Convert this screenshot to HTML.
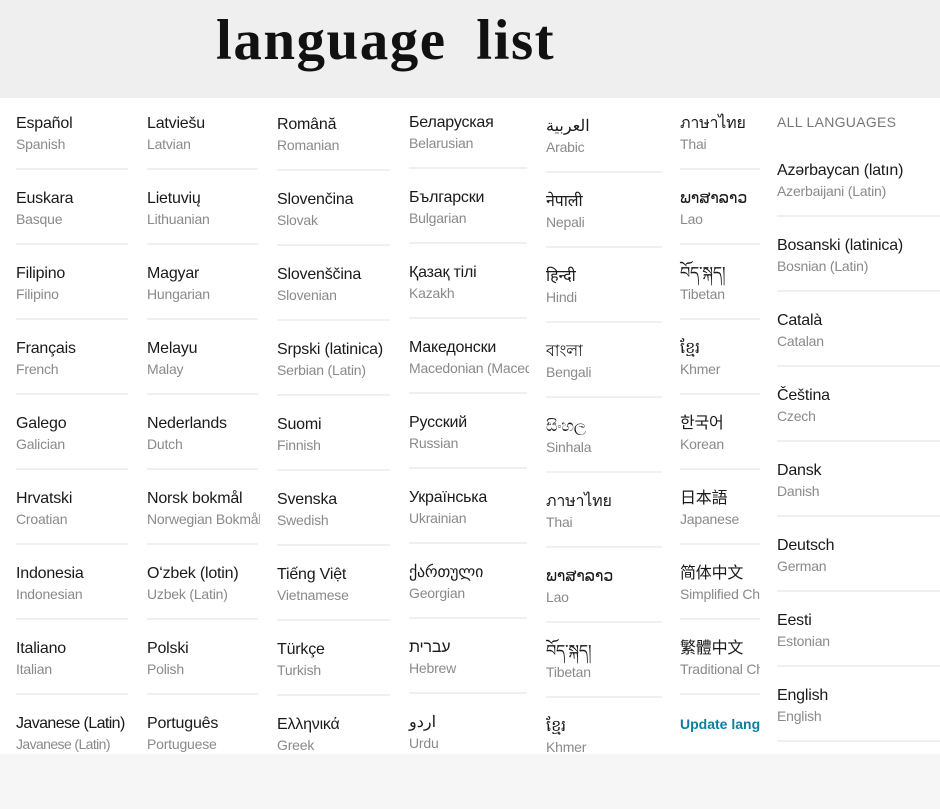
<!DOCTYPE html>
<html><head><meta charset="utf-8"><style>
*{margin:0;padding:0;box-sizing:border-box}
body{width:940px;height:809px;background:#f6f6f6;position:relative;overflow:hidden;font-family:"Liberation Sans","Noto Sans CJK SC",sans-serif}
.hdr{position:absolute;left:0;top:0;width:940px;height:98px;background:#efefef}
.ttl{position:absolute;left:216px;top:6px;font-family:"Liberation Serif",serif;font-weight:bold;font-size:57px;line-height:70px;color:#111;word-spacing:14px;letter-spacing:1.5px;white-space:nowrap}
.col{position:absolute;top:98px;height:656px;background:#fff;overflow:hidden}
.it{position:absolute;left:0;height:75px;white-space:nowrap}
.t{position:absolute;top:6px;font-size:16px;line-height:20px;color:#1a1a1a;letter-spacing:-0.2px}
.s{position:absolute;top:27px;font-size:14px;line-height:18px;color:#8a8a8a;letter-spacing:-0.2px}
.ln{position:absolute;top:60px;height:2px;background:#f0f0f0}
.hd{position:absolute;font-size:14px;color:#777;letter-spacing:0.3px;white-space:nowrap}
.up{position:absolute;font-size:14px;font-weight:bold;color:#0b7fa0;white-space:nowrap}
</style></head><body>
<div class="hdr"></div>
<div class="ttl">language list</div>

<div class="col" style="left:0;width:130px">
<div class="it" style="top:10px"><div class="t" style="left:16px">Español</div><div class="s" style="left:16px">Spanish</div><div class="ln" style="left:16px;width:112px"></div></div>
<div class="it" style="top:85px"><div class="t" style="left:16px">Euskara</div><div class="s" style="left:16px">Basque</div><div class="ln" style="left:16px;width:112px"></div></div>
<div class="it" style="top:160px"><div class="t" style="left:16px">Filipino</div><div class="s" style="left:16px">Filipino</div><div class="ln" style="left:16px;width:112px"></div></div>
<div class="it" style="top:235px"><div class="t" style="left:16px">Français</div><div class="s" style="left:16px">French</div><div class="ln" style="left:16px;width:112px"></div></div>
<div class="it" style="top:310px"><div class="t" style="left:16px">Galego</div><div class="s" style="left:16px">Galician</div><div class="ln" style="left:16px;width:112px"></div></div>
<div class="it" style="top:385px"><div class="t" style="left:16px">Hrvatski</div><div class="s" style="left:16px">Croatian</div><div class="ln" style="left:16px;width:112px"></div></div>
<div class="it" style="top:460px"><div class="t" style="left:16px">Indonesia</div><div class="s" style="left:16px">Indonesian</div><div class="ln" style="left:16px;width:112px"></div></div>
<div class="it" style="top:535px"><div class="t" style="left:16px">Italiano</div><div class="s" style="left:16px">Italian</div><div class="ln" style="left:16px;width:112px"></div></div>
<div class="it" style="top:610px"><div class="t" style="left:16px;letter-spacing:-0.6px">Javanese (Latin)</div><div class="s" style="left:16px;letter-spacing:-0.6px">Javanese (Latin)</div></div>
</div>

<div class="col" style="left:130px;width:130px">
<div class="it" style="top:10px"><div class="t" style="left:17px">Latviešu</div><div class="s" style="left:17px">Latvian</div><div class="ln" style="left:17px;width:111px"></div></div>
<div class="it" style="top:85px"><div class="t" style="left:17px">Lietuvių</div><div class="s" style="left:17px">Lithuanian</div><div class="ln" style="left:17px;width:111px"></div></div>
<div class="it" style="top:160px"><div class="t" style="left:17px">Magyar</div><div class="s" style="left:17px">Hungarian</div><div class="ln" style="left:17px;width:111px"></div></div>
<div class="it" style="top:235px"><div class="t" style="left:17px">Melayu</div><div class="s" style="left:17px">Malay</div><div class="ln" style="left:17px;width:111px"></div></div>
<div class="it" style="top:310px"><div class="t" style="left:17px">Nederlands</div><div class="s" style="left:17px">Dutch</div><div class="ln" style="left:17px;width:111px"></div></div>
<div class="it" style="top:385px"><div class="t" style="left:17px">Norsk bokmål</div><div class="s" style="left:17px">Norwegian Bokmål</div><div class="ln" style="left:17px;width:111px"></div></div>
<div class="it" style="top:460px"><div class="t" style="left:17px">Oʻzbek (lotin)</div><div class="s" style="left:17px">Uzbek (Latin)</div><div class="ln" style="left:17px;width:111px"></div></div>
<div class="it" style="top:535px"><div class="t" style="left:17px">Polski</div><div class="s" style="left:17px">Polish</div><div class="ln" style="left:17px;width:111px"></div></div>
<div class="it" style="top:610px"><div class="t" style="left:17px">Português</div><div class="s" style="left:17px">Portuguese</div></div>
</div>

<div class="col" style="left:260px;width:132px">
<div class="it" style="top:11px"><div class="t" style="left:17px">Română</div><div class="s" style="left:17px">Romanian</div><div class="ln" style="left:17px;width:113px"></div></div>
<div class="it" style="top:86px"><div class="t" style="left:17px">Slovenčina</div><div class="s" style="left:17px">Slovak</div><div class="ln" style="left:17px;width:113px"></div></div>
<div class="it" style="top:161px"><div class="t" style="left:17px">Slovenščina</div><div class="s" style="left:17px">Slovenian</div><div class="ln" style="left:17px;width:113px"></div></div>
<div class="it" style="top:236px"><div class="t" style="left:17px">Srpski (latinica)</div><div class="s" style="left:17px">Serbian (Latin)</div><div class="ln" style="left:17px;width:113px"></div></div>
<div class="it" style="top:311px"><div class="t" style="left:17px">Suomi</div><div class="s" style="left:17px">Finnish</div><div class="ln" style="left:17px;width:113px"></div></div>
<div class="it" style="top:386px"><div class="t" style="left:17px">Svenska</div><div class="s" style="left:17px">Swedish</div><div class="ln" style="left:17px;width:113px"></div></div>
<div class="it" style="top:461px"><div class="t" style="left:17px">Tiếng Việt</div><div class="s" style="left:17px">Vietnamese</div><div class="ln" style="left:17px;width:113px"></div></div>
<div class="it" style="top:536px"><div class="t" style="left:17px">Türkçe</div><div class="s" style="left:17px">Turkish</div><div class="ln" style="left:17px;width:113px"></div></div>
<div class="it" style="top:611px"><div class="t" style="left:17px">Ελληνικά</div><div class="s" style="left:17px">Greek</div></div>
</div>

<div class="col" style="left:392px;width:137px">
<div class="it" style="top:9px"><div class="t" style="left:17px">Беларуская</div><div class="s" style="left:17px">Belarusian</div><div class="ln" style="left:17px;width:118px"></div></div>
<div class="it" style="top:84px"><div class="t" style="left:17px">Български</div><div class="s" style="left:17px">Bulgarian</div><div class="ln" style="left:17px;width:118px"></div></div>
<div class="it" style="top:159px"><div class="t" style="left:17px">Қазақ тілі</div><div class="s" style="left:17px">Kazakh</div><div class="ln" style="left:17px;width:118px"></div></div>
<div class="it" style="top:234px"><div class="t" style="left:17px">Македонски</div><div class="s" style="left:17px">Macedonian (Macedonia)</div><div class="ln" style="left:17px;width:118px"></div></div>
<div class="it" style="top:309px"><div class="t" style="left:17px">Русский</div><div class="s" style="left:17px">Russian</div><div class="ln" style="left:17px;width:118px"></div></div>
<div class="it" style="top:384px"><div class="t" style="left:17px">Українська</div><div class="s" style="left:17px">Ukrainian</div><div class="ln" style="left:17px;width:118px"></div></div>
<div class="it" style="top:459px"><div class="t" style="left:17px">ქართული</div><div class="s" style="left:17px">Georgian</div><div class="ln" style="left:17px;width:118px"></div></div>
<div class="it" style="top:534px"><div class="t" style="left:17px">עברית</div><div class="s" style="left:17px">Hebrew</div><div class="ln" style="left:17px;width:118px"></div></div>
<div class="it" style="top:609px"><div class="t" style="left:17px">اردو</div><div class="s" style="left:17px">Urdu</div></div>
</div>

<div class="col" style="left:529px;width:135px">
<div class="it" style="top:13px"><div class="t" style="left:17px">العربية</div><div class="s" style="left:17px">Arabic</div><div class="ln" style="left:17px;width:116px"></div></div>
<div class="it" style="top:88px"><div class="t" style="left:17px">नेपाली</div><div class="s" style="left:17px">Nepali</div><div class="ln" style="left:17px;width:116px"></div></div>
<div class="it" style="top:163px"><div class="t" style="left:17px">हिन्दी</div><div class="s" style="left:17px">Hindi</div><div class="ln" style="left:17px;width:116px"></div></div>
<div class="it" style="top:238px"><div class="t" style="left:17px">বাংলা</div><div class="s" style="left:17px">Bengali</div><div class="ln" style="left:17px;width:116px"></div></div>
<div class="it" style="top:313px"><div class="t" style="left:17px">සිංහල</div><div class="s" style="left:17px">Sinhala</div><div class="ln" style="left:17px;width:116px"></div></div>
<div class="it" style="top:388px"><div class="t" style="left:17px">ภาษาไทย</div><div class="s" style="left:17px">Thai</div><div class="ln" style="left:17px;width:116px"></div></div>
<div class="it" style="top:463px"><div class="t" style="left:17px">ພາສາລາວ</div><div class="s" style="left:17px">Lao</div><div class="ln" style="left:17px;width:116px"></div></div>
<div class="it" style="top:538px"><div class="t" style="left:17px">བོད་སྐད།</div><div class="s" style="left:17px">Tibetan</div><div class="ln" style="left:17px;width:116px"></div></div>
<div class="it" style="top:613px"><div class="t" style="left:17px">ខ្មែរ</div><div class="s" style="left:17px">Khmer</div></div>
</div>

<div class="col" style="left:664px;width:96px">
<div class="it" style="top:10px"><div class="t" style="left:16px">ภาษาไทย</div><div class="s" style="left:16px">Thai</div><div class="ln" style="left:16px;width:80px"></div></div>
<div class="it" style="top:85px"><div class="t" style="left:16px">ພາສາລາວ</div><div class="s" style="left:16px">Lao</div><div class="ln" style="left:16px;width:80px"></div></div>
<div class="it" style="top:160px"><div class="t" style="left:16px">བོད་སྐད།</div><div class="s" style="left:16px">Tibetan</div><div class="ln" style="left:16px;width:80px"></div></div>
<div class="it" style="top:235px"><div class="t" style="left:16px">ខ្មែរ</div><div class="s" style="left:16px">Khmer</div><div class="ln" style="left:16px;width:80px"></div></div>
<div class="it" style="top:310px"><div class="t" style="left:16px">한국어</div><div class="s" style="left:16px">Korean</div><div class="ln" style="left:16px;width:80px"></div></div>
<div class="it" style="top:385px"><div class="t" style="left:16px">日本語</div><div class="s" style="left:16px">Japanese</div><div class="ln" style="left:16px;width:80px"></div></div>
<div class="it" style="top:460px"><div class="t" style="left:16px">简体中文</div><div class="s" style="left:16px">Simplified Chinese</div><div class="ln" style="left:16px;width:80px"></div></div>
<div class="it" style="top:535px"><div class="t" style="left:16px">繁體中文</div><div class="s" style="left:16px">Traditional Chinese</div><div class="ln" style="left:16px;width:80px"></div></div>
<div class="up" style="left:16px;top:618px">Update languages</div>
</div>

<div class="col" style="left:760px;width:180px">
<div class="hd" style="left:17px;top:16px">ALL LANGUAGES</div>
<div class="it" style="top:57px"><div class="t" style="left:17px">Azərbaycan (latın)</div><div class="s" style="left:17px">Azerbaijani (Latin)</div><div class="ln" style="left:17px;width:163px"></div></div>
<div class="it" style="top:132px"><div class="t" style="left:17px">Bosanski (latinica)</div><div class="s" style="left:17px">Bosnian (Latin)</div><div class="ln" style="left:17px;width:163px"></div></div>
<div class="it" style="top:207px"><div class="t" style="left:17px">Català</div><div class="s" style="left:17px">Catalan</div><div class="ln" style="left:17px;width:163px"></div></div>
<div class="it" style="top:282px"><div class="t" style="left:17px">Čeština</div><div class="s" style="left:17px">Czech</div><div class="ln" style="left:17px;width:163px"></div></div>
<div class="it" style="top:357px"><div class="t" style="left:17px">Dansk</div><div class="s" style="left:17px">Danish</div><div class="ln" style="left:17px;width:163px"></div></div>
<div class="it" style="top:432px"><div class="t" style="left:17px">Deutsch</div><div class="s" style="left:17px">German</div><div class="ln" style="left:17px;width:163px"></div></div>
<div class="it" style="top:507px"><div class="t" style="left:17px">Eesti</div><div class="s" style="left:17px">Estonian</div><div class="ln" style="left:17px;width:163px"></div></div>
<div class="it" style="top:582px"><div class="t" style="left:17px">English</div><div class="s" style="left:17px">English</div><div class="ln" style="left:17px;width:163px"></div></div>
</div>
</body></html>
